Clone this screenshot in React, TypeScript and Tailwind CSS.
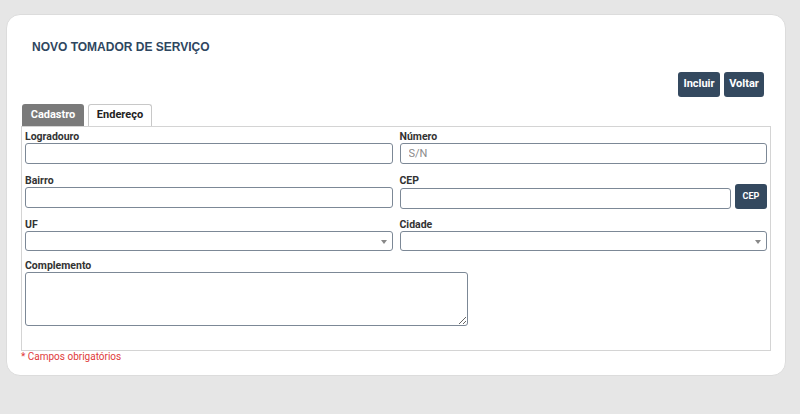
import React from 'react';

const font = { fontFamily: '"Liberation Sans", Arial, sans-serif' };
const narrow = { fontFamily: '"Liberation Sans Narrow", "Arial Narrow", Roboto, sans-serif' };
const roboto = { fontFamily: 'Roboto, "Liberation Sans", sans-serif' };

function Field({ label, children }: { label: string; children: React.ReactNode }) {
  return (
    <div className="flex flex-col">
      <label className="text-[10.5px] font-bold text-[#333] leading-[12px]" style={roboto}>{label}</label>
      {children}
    </div>
  );
}

function TextInput({ placeholder }: { placeholder?: string }) {
  return (
    <input
      placeholder={placeholder}
      className="w-full h-[21px] border border-[#7c8896] rounded-[3px] px-2 text-[11px] text-[#333] placeholder:text-[#8a8a8a] bg-white outline-none"
      style={roboto}
    />
  );
}

function SelectBox() {
  return (
    <div className="relative w-full h-[20px] border border-[#7c8896] rounded-[3px] bg-white">
      <span className="absolute right-[5px] top-[8px] w-0 h-0 border-l-[3px] border-r-[3px] border-t-[4px] border-l-transparent border-r-transparent border-t-[#888]" />
    </div>
  );
}

export default function App() {
  return (
    <div className="w-[800px] h-[414px] bg-[#e6e6e6] pt-[14px] pl-[6px]" style={font}>
      <div className="w-[780px] h-[362px] bg-white rounded-[14px] border border-[#dcdcdc] px-[14px] pt-[24px]">
        <h1 className="pl-[11px] text-[12px] font-bold text-[#2e4660] leading-[16px]">NOVO TOMADOR DE SERVIÇO</h1>

        <div className="flex justify-end gap-[4px] mt-[17px] pr-[7px]" style={narrow}>
          <button className="h-[25px] w-[42px] bg-[#34495f] text-white text-[11px] font-bold rounded-[3px]">Incluir</button>
          <button className="h-[25px] w-[40px] bg-[#34495f] text-white text-[11px] font-bold rounded-[3px]">Voltar</button>
        </div>

        <div className="flex gap-[4px] mt-[7px] pl-[1px]" style={narrow}>
          <div className="w-[62px] h-[22px] bg-[#7a7a7a] text-white text-[11px] font-bold flex items-center justify-center rounded-t-[3px]">Cadastro</div>
          <div className="w-[64px] h-[22px] bg-white border border-b-0 border-[#c8c8c8] text-[#222] text-[11px] font-bold flex items-center justify-center rounded-t-[3px]">Endereço</div>
        </div>

        <div className="border border-[#d4d4d4] h-[225px] px-[3px] pt-[4px]">
          <div className="grid grid-cols-2 gap-x-[7px]">
            <Field label="Logradouro"><TextInput /></Field>
            <Field label="Número"><TextInput placeholder="S/N" /></Field>
            <div className="mt-[11px]"><Field label="Bairro"><TextInput /></Field></div>
            <div className="mt-[11px]">
              <Field label="CEP">
                <div className="flex gap-[4px] items-center">
                  <TextInput />
                  <button className="h-[25px] w-[32px] -mt-[3px] bg-[#34495f] text-white text-[9px] font-bold rounded-[3px] shrink-0" style={narrow}>CEP</button>
                </div>
              </Field>
            </div>
            <div className="mt-[10px]"><Field label="UF"><SelectBox /></Field></div>
            <div className="mt-[10px]"><Field label="Cidade"><SelectBox /></Field></div>
          </div>
          <div className="mt-[9px]">
            <Field label="Complemento">
              <textarea className="w-[443px] h-[54px] border border-[#7c8896] rounded-[3px] resize-y outline-none block" />
            </Field>
          </div>
        </div>

        <p className="text-[10px] text-[#e03a3a] leading-[12px]" style={roboto}>* Campos obrigatórios</p>
      </div>
    </div>
  );
}
